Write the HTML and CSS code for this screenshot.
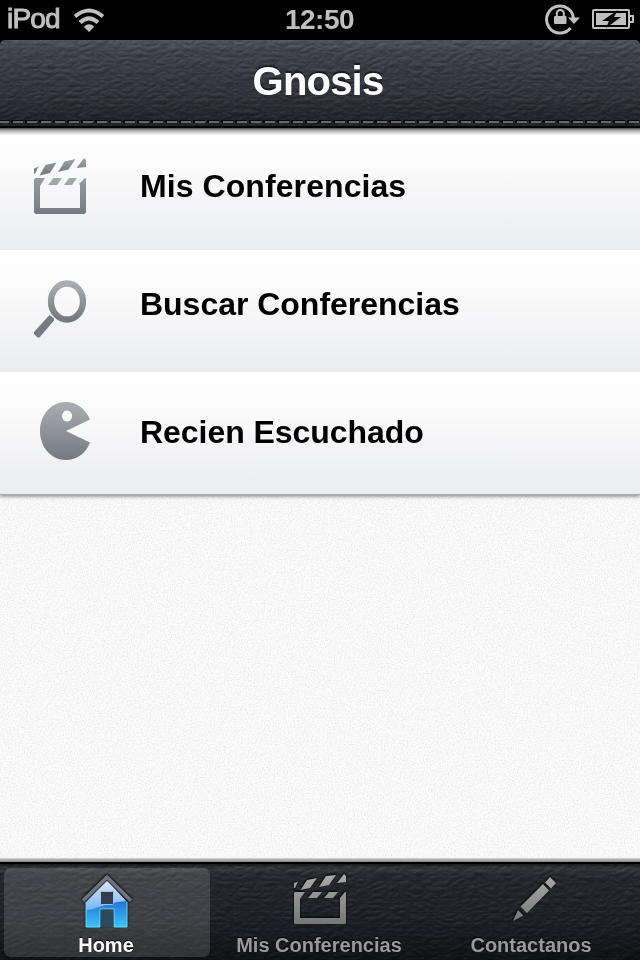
FILE: index.html
```html
<!DOCTYPE html>
<html lang="es">
<head>
<meta charset="utf-8">
<title>Gnosis</title>
<link rel="stylesheet" href="styles.css">
</head>
<body>
<svg class="defs" width="0" height="0" aria-hidden="true">
  <defs>
    <linearGradient id="steel" x1="0" y1="0" x2="0" y2="1"><stop offset="0" stop-color="#aaadb1"/><stop offset="1" stop-color="#747982"/></linearGradient>
    <linearGradient id="slate" gradientUnits="userSpaceOnUse" x1="0" y1="0" x2="0" y2="60"><stop offset="0" stop-color="#aaadb1"/><stop offset="1" stop-color="#727780"/></linearGradient>
    <linearGradient id="flap" gradientUnits="userSpaceOnUse" x1="0" y1="0" x2="0" y2="17"><stop offset="0" stop-color="#a0a3a7"/><stop offset="1" stop-color="#74787e"/></linearGradient>
    <linearGradient id="ash" gradientUnits="userSpaceOnUse" x1="0" y1="0" x2="0" y2="56"><stop offset="0" stop-color="#aaa"/><stop offset="1" stop-color="#707070"/></linearGradient>
    <linearGradient id="pale" gradientUnits="userSpaceOnUse" x1="0" y1="10" x2="0" y2="36"><stop offset="0" stop-color="#d5dcf5"/><stop offset="1" stop-color="#72b5f5"/></linearGradient>
    <linearGradient id="blue" gradientUnits="userSpaceOnUse" x1="0" y1="28" x2="0" y2="54"><stop offset="0" stop-color="#2379d6"/><stop offset="1" stop-color="#41c9ff"/></linearGradient>
    <filter id="leather" x="0" y="0" width="100%" height="100%" color-interpolation-filters="sRGB">
      <feTurbulence type="turbulence" baseFrequency=".09 .17" numOctaves="3" seed="7" result="n"/>
      <feDiffuseLighting in="n" surfaceScale="1" diffuseConstant="1" lighting-color="#fff"><feDistantLight azimuth="250" elevation="35"/></feDiffuseLighting>
      <feColorMatrix values="1 0 0 0 -.07 0 1 0 0 -.07 0 0 1 0 -.07 0 0 0 1 0"/>
    </filter>
    <filter id="paper" x="0" y="0" width="100%" height="100%" color-interpolation-filters="sRGB">
      <feTurbulence type="fractalNoise" baseFrequency=".7" numOctaves="2" seed="3"/>
      <feColorMatrix values="0 0 0 0 0  0 0 0 0 0  0 0 0 0 0  .18 0 0 0 -.075"/>
    </filter>
  </defs>
</svg>
<div class="screen">
  <header class="status">
    <div class="carrier"><span>iPod</span>
      <svg width="32" height="24" viewBox="0 0 32 24"><g fill="none" stroke="#bfbfbf" stroke-width="4"><path d="M2 8.500Q16-3.500 30 8.500"/><path d="M7 14.500Q16 6.200 25 14.500"/></g><path d="M10.800 18.700Q16 14 21.200 18.700L16 24z" fill="#bfbfbf"/></svg>
    </div>
    <time>12:50</time>
    <div class="indicators">
      <svg width="36" height="32" viewBox="0 0 36 32"><path d="M25.600 25A13.500 13.500 0 1 1 28.500 15" fill="none" stroke="#bfbfbf" stroke-width="3"/><path d="M23 14.500h12L29 21z" fill="#bfbfbf"/><rect x="9" y="13" width="12.500" height="8" rx="1" fill="#bfbfbf"/><path d="M11.800 14v-3.500a3.500 3.500 0 0 1 7 0V14" fill="none" stroke="#bfbfbf" stroke-width="2"/></svg>
      <svg width="44" height="22" viewBox="0 0 44 22"><rect x="1" y="2" width="36" height="18" rx="1" fill="none" stroke="#bfbfbf" stroke-width="2"/><path d="M38 8h3v6h-3" fill="none" stroke="#bfbfbf" stroke-width="2"/><path d="M4 5h30v12H4z" fill="#bfbfbf"/><path d="M26 2L10 13h7L14 20l15-11H22z" fill="#000"/></svg>
    </div>
  </header>
  <div class="navbar">
    <svg class="grain" width="640" height="86"><rect width="640" height="86" filter="url(#leather)"/></svg>
    <h1>Gnosis</h1>
    <svg class="stitch" width="640" height="4"><path d="M0 1.500H640" stroke="#08080a" stroke-width="3" stroke-dasharray="12 2" stroke-dashoffset="3"/><path d="M-1 2H640" stroke="#85878e" stroke-width="1.600" stroke-dasharray="10 4"/></svg>
  </div>
  <main>
    <svg class="noise" width="640" height="366"><rect width="640" height="366" filter="url(#paper)"/></svg>
    <ul class="menu">
      <li><svg width="52" height="56" viewBox="0 0 52 56"><g fill="url(#flap)"><path d="M0 10.500l4.500-2L1.500 15 0 16zM11.500 7l11-2.500-6.500 10.500-10.500 2.500zM30.500 3.500l11-2.500-7 10.500-10.500 2.500zM50 0l2 2v7l-9.500 1z"/></g><g fill="url(#slate)"><path d="M1.500 20H11l-5 8v22h40V27l-1-1 6-6h1v34.500L50.500 56h-49L0 54.500v-33z"/><path d="M19.500 20H28l-5 7h-9zM35 20h8l-5 7h-8z" opacity=".85"/></g></svg><span>Mis Conferencias</span></li>
      <li class="search"><svg width="52" height="58" viewBox="0 0 52 58"><ellipse cx="33" cy="21.500" rx="16" ry="18" fill="none" stroke="url(#steel)" stroke-width="6.300"/><path d="M15.500 35l4.500 3.500v2L5.500 57.500h-2L0 54v-2z" fill="#767b83"/></svg><span>Buscar Conferencias</span></li>
      <li class="recent"><svg width="50" height="58" viewBox="0 0 50 58"><path fill="url(#steel)" fill-rule="evenodd" d="M50 17.500L26 29l24 11.500C46 51 37 58 26 58 11 58 0 45 0 29S11 0 26 0c11 0 19 6.500 24 17.500zM27 8.500a5 5.500 0 1 0 .1 0z"/></svg><span>Recien Escuchado</span></li>
    </ul>
  </main>
  <nav class="tabs">
    <svg class="grain" width="640" height="98"><rect width="640" height="98" filter="url(#leather)"/></svg>
    <a class="tab selected"><svg width="52" height="56" viewBox="0 0 52 56"><path d="M26 5L5 27v25h14V34h14v18h13V27z" fill="url(#pale)"/><path d="M5 35c14-1 16-7 41-9v26H33V34H19v18H5z" fill="url(#blue)"/><path d="M5 27v25h14V34h14v18h13V27" fill="none" stroke="#66dbff" stroke-width="1"/><rect x="19.500" y="16.500" width="13" height="13" rx="1" fill="#343b4a" stroke="#8bc9fc"/><path d="M20 35h12v17H20z" fill="#2b4b5c"/><path d="M2 27L26 3.500 50 27" fill="none" stroke="#343840" stroke-width="3.500"/><path d="M2 25.500L26 2 50 25.500" fill="none" stroke="#6d7482" stroke-width="3.500"/></svg><span>Home</span></a>
    <a class="tab"><svg width="52" height="56" viewBox="0 0 52 56"><g fill="url(#ash)"><path d="M0 9l4-1.500L1 14H0zM13 6l10-2-7 10-9.500 2zM32 2l10-1-7 10-10 2zM50 0l2 2v6l-9 1z"/><path d="M1 18h10l-5 7v19h40V24l5-6h1v31l-1 1H1l-1-1V19z"/><path d="M19 18h9l-5 6h-9zM35 18h9l-5 6h-9z"/></g></svg><span>Mis Conferencias</span></a>
    <a class="tab pencil"><svg width="46" height="56" viewBox="0 0 46 56"><g fill="url(#ash)"><path d="M38 3l6 6-5 5.500-6-6zM31 10l6 6.500L15 39l-6.500-6.500zM6 36l5.500 5.500L1 47z"/></g></svg><span>Contactanos</span></a>
  </nav>
</div>
</body>
</html>
```
FILE: styles.css
```css
* { box-sizing: border-box; }
body { margin: 0; font-family: "Liberation Sans", Arial, sans-serif; background: #000; }
svg { display: block; flex: none; }
.defs { position: absolute; }
.screen { width: 640px; height: 960px; display: flex; flex-direction: column; overflow: hidden; }

.status { height: 40px; background: #000; color: #bfbfbf; display: grid; grid-template-columns: 1fr auto 1fr; padding: 0 4px 0 7px; font-size: 28px; line-height: 39px; }
.carrier { display: flex; gap: 13px; align-items: center; }
.carrier span { letter-spacing: -.8px; -webkit-text-stroke: 1px #bfbfbf; line-height: 38px; align-self: flex-start; }
.carrier svg { margin-top: -1px; }
.status time { font-weight: bold; letter-spacing: -.5px; padding-right: 4px; }
.indicators { display: flex; justify-content: flex-end; align-items: center; gap: 11px; padding-bottom: 2px; }

.navbar { position: relative; z-index: 2; height: 88px; border-radius: 5px 5px 0 0; overflow: hidden; background: linear-gradient(#50535d, #3e404b 14%, #32333c 60%, #212227 97%); border-bottom: 2px solid #030305; }
.grain { position: absolute; left: 0; top: 0; mix-blend-mode: soft-light; opacity: .4; }
.navbar h1 { position: relative; margin: 0; padding-right: 4px; color: #fff; font-size: 40px; line-height: 83px; text-align: center; letter-spacing: -.8px; text-shadow: 0 -2px 1px rgba(0,0,0,.55); }
.stitch { position: absolute; left: 0; bottom: 2px; }

main { position: relative; flex: 1; background: #fcfcfc; }
main::before, main::after { content: ""; position: absolute; z-index: 1; left: 0; right: 0; }
main::before { top: 0; height: 7px; background: linear-gradient(#484848, #aaa 35%, rgba(255,255,255,0)); }
main::after { bottom: 0; height: 4px; background: linear-gradient(#d5d5d5, #aaa 50%, #888); }
.noise { position: absolute; left: 0; bottom: 0; }
.menu { position: relative; list-style: none; margin: 0; padding: 0; box-shadow: 0 1px 0 #a7a8a9, 0 2px 4px rgba(0,0,0,.55); }
.menu li { height: 122px; padding: 30px 34px; display: flex; background: linear-gradient(#fff, #fafafb 35%, #ebecee); }
.menu svg { margin-right: 54px; }
.menu span { font-weight: bold; font-size: 32px; line-height: 36px; letter-spacing: .08px; color: #000; padding-top: 10px; white-space: nowrap; }
.menu .search span { padding-top: 6px; letter-spacing: -.02px; }
.menu .recent { padding-left: 40px; }
.recent svg { margin-right: 50px; }
.menu .recent span { padding-top: 12px; letter-spacing: -.05px; }

.tabs { position: relative; height: 98px; border-top: 2px solid #000; padding: 4px; display: grid; grid-template-columns: 206px 206px 206px; gap: 6px; background: linear-gradient(#15161a, #34363b 4%, #26272d 12%, #202127 55%, #101115); }
.tab { position: relative; display: flex; flex-direction: column; align-items: center; border-radius: 7px; color: #999; font-size: 20px; font-weight: bold; }
.tab svg { margin: 6px 0 0 2px; filter: drop-shadow(0 -1px 1px #000); }
.tab.selected svg { margin: 7px 0 -1px; }
.tab.pencil svg { margin-left: 7px; }
.tab span { line-height: 24px; margin-top: 3px; white-space: nowrap; text-shadow: 0 -1px 1px #000; }
.tab.selected span { margin-right: 2px; }
.selected { background: rgba(255,255,255,.14); color: #fff; }
```
